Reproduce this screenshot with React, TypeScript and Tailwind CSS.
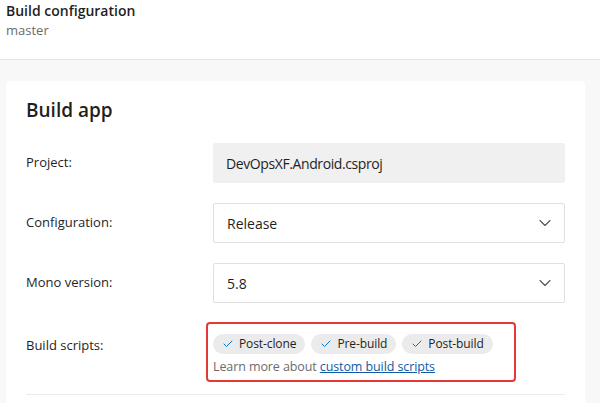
import React from 'react';
import { ChevronDown, Check } from 'lucide-react';

const font = { fontFamily: '"Open Sans", "Noto Sans", sans-serif' };

interface RowProps {
  label: string;
  children: React.ReactNode;
}

const Row: React.FC<RowProps> = ({ label, children }) => (
  <div className="flex items-center">
    <div className="w-[187px] shrink-0 text-[13px] text-[#1f1f1f]">{label}</div>
    <div className="flex-1">{children}</div>
  </div>
);

const Select: React.FC<{ value: string }> = ({ value }) => (
  <div className="h-[40px] flex items-center justify-between border border-[#e0e0e0] rounded-[2px] pl-[13px] pr-[9px] bg-white">
    <span className="text-[14px] text-[#1f1f1f]">{value}</span>
    <ChevronDown size={20} strokeWidth={1.3} className="text-[#555]" />
  </div>
);

const Pill: React.FC<{ label: string }> = ({ label }) => (
  <span className="inline-flex items-center gap-[5px] h-[20px] pl-[9px] pr-[9px] rounded-full bg-[#ebebeb] text-[12px] tracking-[-0.1px] text-[#1f1f1f]">
    <Check size={12} strokeWidth={2} className="text-[#0078d4]" />
    {label}
  </span>
);

export default function App() {
  return (
    <div style={font} className="w-[600px] h-[403px] overflow-hidden bg-[#f8f8f8]">
      <div className="bg-white border-b border-[#e6e6e6] h-[60px] px-[6px] pt-[1px]">
        <div className="text-[14px] leading-[20px] font-semibold text-[#1f1f1f]">Build configuration</div>
        <div className="text-[13px] leading-[18px] text-[#6b6b6b]">master</div>
      </div>
      <div className="pt-[21px] pl-[6px] pr-[15px]">
        <div className="bg-white rounded-[4px] px-[20px] pt-[15px] pb-[20px]">
          <h2 className="text-[19px] leading-[28px] font-semibold text-[#1f1f1f]">Build app</h2>
          <div className="mt-[19px] flex flex-col gap-[20px]">
            <Row label="Project:">
              <div className="h-[40px] flex items-center bg-[#f0f0f0] rounded-[2px] pl-[13px] text-[14px] tracking-[-0.4px] text-[#1f1f1f]">
                DevOpsXF.Android.csproj
              </div>
            </Row>
            <Row label="Configuration:">
              <Select value="Release" />
            </Row>
            <Row label="Mono version:">
              <Select value="5.8" />
            </Row>
          </div>
          <div className="mt-[19px] flex items-start">
            <div className="w-[187px] shrink-0 text-[13px] text-[#1f1f1f] pt-[14px]">Build scripts:</div>
            <div className="-ml-[7px] w-[310px] h-[60px] border-2 border-[#e53935] rounded-[4px] pl-[5px] pt-[10px]">
              <div className="flex gap-[6px]">
                <Pill label="Post-clone" />
                <Pill label="Pre-build" />
                <Pill label="Post-build" />
              </div>
              <div className="mt-[4px] text-[12.5px] leading-[18px] tracking-[-0.1px] text-[#6b6b6b]">
                Learn more about{' '}
                <a className="text-[#0f5ba7] underline">custom build scripts</a>
              </div>
            </div>
          </div>
          <div className="mt-[12px] border-t border-[#ebebeb]" />
        </div>
      </div>
    </div>
  );
}
